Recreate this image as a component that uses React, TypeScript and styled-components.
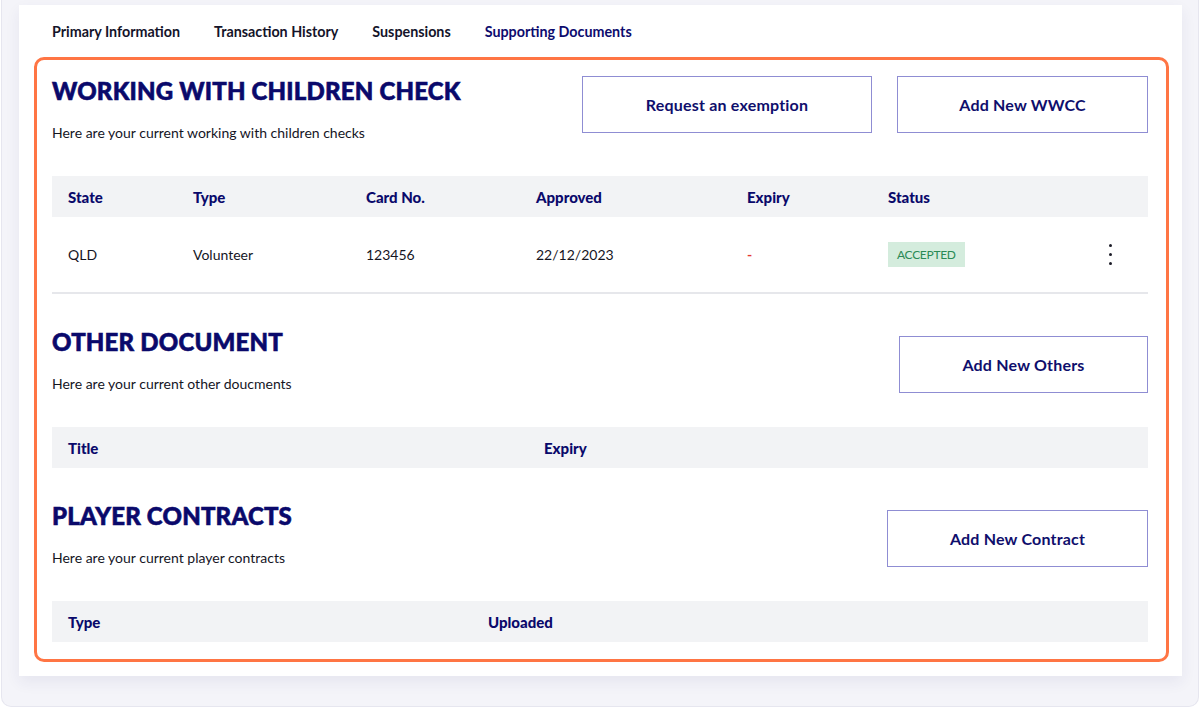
import styled, { createGlobalStyle } from 'styled-components';

const GlobalStyle = createGlobalStyle`
  body {
    margin: 0;
    background: #ffffff;
    font-family: Lato, "Open Sans", sans-serif;
  }
`;

const Frame = styled.div`
  margin: 0 1px;
  height: 707px;
  box-sizing: border-box;
  background: #f4f4f9;
  border: 1px solid #e6e6ef;
  border-top: none;
  border-radius: 0 0 10px 10px;
  padding: 5px 16px 0 17px;
`;

const Panel = styled.div`
  background: #ffffff;
  box-shadow: 0 6px 14px rgba(40, 40, 110, 0.07);
  padding: 0 13px 14px 15px;
`;

const Tabs = styled.nav`
  height: 52px;
  display: flex;
  align-items: center;
  gap: 34px;
  padding-left: 18px;
`;

const Tab = styled.span<{ $active?: boolean }>`
  font-size: 14.3px;
  font-weight: 700;
  color: ${(p) => (p.$active ? '#0d0c6e' : '#14142a')};
`;

const Highlight = styled.div`
  border: 3px solid #ff7544;
  border-radius: 10px;
  padding: 16px 18px 17px 15px;
`;

const Section = styled.section`
  & + & {
    margin-top: 33px;
  }
`;

const SectionHeader = styled.div`
  display: flex;
  justify-content: space-between;
  align-items: flex-start;
  margin-bottom: 34px;
`;

const Heading = styled.h2`
  margin: 0;
  font-size: 24px;
  line-height: 30px;
  font-weight: 900;
  letter-spacing: 0.2px;
  -webkit-text-stroke: 0.6px #0a096b;
  color: #0a096b;
`;

const Subtitle = styled.p`
  margin: 17px 0 0;
  font-size: 14px;
  line-height: 19px;
  color: #15151f;
`;

const Actions = styled.div<{ $offset: number }>`
  display: flex;
  gap: 25px;
  margin-top: ${(p) => p.$offset}px;
`;

const Button = styled.button<{ $width: number }>`
  width: ${(p) => p.$width}px;
  height: 57px;
  background: #ffffff;
  border: 1px solid #8f8dd3;
  font-family: inherit;
  font-size: 16px;
  letter-spacing: 0.2px;
  font-weight: 700;
  color: #0f0e6c;
  cursor: pointer;
`;

const HeadRow = styled.div<{ $cols: string }>`
  display: grid;
  grid-template-columns: ${(p) => p.$cols};
  align-items: center;
  height: 41px;
  padding-left: 16px;
  background: #f2f3f5;
  font-size: 15px;
  font-weight: 900;
  color: #0a096b;
`;

const BodyRow = styled.div<{ $cols: string }>`
  display: grid;
  grid-template-columns: ${(p) => p.$cols};
  align-items: center;
  height: 75px;
  padding-left: 16px;
  border-bottom: 2px solid #e6e7eb;
  font-size: 14px;
  color: #15151f;
`;

const Dash = styled.span`
  color: #e53935;
  font-weight: 700;
`;

const StatusCell = styled.div`
  display: flex;
  align-items: center;
  justify-content: space-between;
  padding-right: 36px;
`;

const Badge = styled.span`
  background: #d4ecdd;
  color: #2a8a55;
  font-size: 12px;
  letter-spacing: -0.3px;
  padding: 5px 9px;
  text-transform: uppercase;
`;

const Kebab = styled.span`
  display: flex;
  flex-direction: column;
  gap: 5.5px;
  & > i {
    width: 3.2px;
    height: 3.2px;
    border-radius: 50%;
    background: #1c1c28;
  }
`;

const wwccCols = '125px 173px 170px 211px 141px 1fr';

export default function App() {
  return (
    <>
      <GlobalStyle />
      <Frame>
        <Panel>
          <Tabs>
            <Tab>Primary Information</Tab>
            <Tab>Transaction History</Tab>
            <Tab>Suspensions</Tab>
            <Tab $active>Supporting Documents</Tab>
          </Tabs>
          <Highlight>
            <Section>
              <SectionHeader>
                <div>
                  <Heading>WORKING WITH CHILDREN CHECK</Heading>
                  <Subtitle>Here are your current working with children checks</Subtitle>
                </div>
                <Actions $offset={0}>
                  <Button $width={290}>Request an exemption</Button>
                  <Button $width={251}>Add New WWCC</Button>
                </Actions>
              </SectionHeader>
              <HeadRow $cols={wwccCols}>
                <span>State</span>
                <span>Type</span>
                <span>Card No.</span>
                <span>Approved</span>
                <span>Expiry</span>
                <span>Status</span>
              </HeadRow>
              <BodyRow $cols={wwccCols}>
                <span>QLD</span>
                <span>Volunteer</span>
                <span>123456</span>
                <span>22/12/2023</span>
                <Dash>-</Dash>
                <StatusCell>
                  <Badge>Accepted</Badge>
                  <Kebab>
                    <i />
                    <i />
                    <i />
                  </Kebab>
                </StatusCell>
              </BodyRow>
            </Section>

            <Section>
              <SectionHeader>
                <div>
                  <Heading>OTHER DOCUMENT</Heading>
                  <Subtitle>Here are your current other doucments</Subtitle>
                </div>
                <Actions $offset={9}>
                  <Button $width={249}>Add New Others</Button>
                </Actions>
              </SectionHeader>
              <HeadRow $cols="476px 1fr">
                <span>Title</span>
                <span>Expiry</span>
              </HeadRow>
            </Section>

            <Section>
              <SectionHeader>
                <div>
                  <Heading>PLAYER CONTRACTS</Heading>
                  <Subtitle>Here are your current player contracts</Subtitle>
                </div>
                <Actions $offset={9}>
                  <Button $width={261}>Add New Contract</Button>
                </Actions>
              </SectionHeader>
              <HeadRow $cols="420px 1fr">
                <span>Type</span>
                <span>Uploaded</span>
              </HeadRow>
            </Section>
          </Highlight>
        </Panel>
      </Frame>
    </>
  );
}
